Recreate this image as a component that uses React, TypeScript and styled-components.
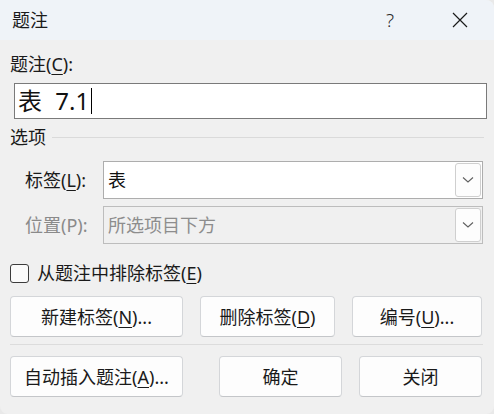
import styled, { createGlobalStyle } from 'styled-components';

const GlobalStyle = createGlobalStyle`
  html, body {
    margin: 0;
    padding: 0;
    background: #e9e9e9;
  }
  body {
    font-family: "Noto Sans", "Noto Sans CJK SC", sans-serif;
    color: #1a1a1a;
  }
`;

const Chevron = () => (
  <svg width="12" height="8" viewBox="0 0 12 8">
    <path d="M1 1.5 L6 6 L11 1.5" fill="none" stroke="#606060" strokeWidth="1.1" />
  </svg>
);

const CloseIcon = () => (
  <svg width="16" height="16" viewBox="0 0 16 16">
    <path d="M1 1 L15 15 M15 1 L1 15" stroke="#1a1a1a" strokeWidth="1.2" />
  </svg>
);

const Combo = ({ value, disabled }: { value: string; disabled?: boolean }) => (
  <ComboBox $disabled={disabled}>
    <ComboText $disabled={disabled}>{value}</ComboText>
    <DropButton>
      <Chevron />
    </DropButton>
  </ComboBox>
);

const App = () => {
  return (
    <>
      <GlobalStyle />
      <Window>
        <TitleBar>
          <Title>题注</Title>
          <TitleButtons>
            <TitleButton $width={70}>?</TitleButton>
            <TitleButton $width={69}>
              <CloseIcon />
            </TitleButton>
          </TitleButtons>
        </TitleBar>

        <Body>
          <FieldLabel>
            题注(<u>C</u>):
          </FieldLabel>
          <CaptionInput>
            <span>表 7.1</span>
            <Caret />
          </CaptionInput>

          <GroupHeader>
            <span>选项</span>
            <GroupLine />
          </GroupHeader>

          <OptionsGrid>
            <OptionLabel>
              标签(<u>L</u>):
            </OptionLabel>
            <Combo value="表" />
            <OptionLabel $disabled>位置(P):</OptionLabel>
            <Combo value="所选项目下方" disabled />
          </OptionsGrid>

          <CheckRow>
            <CheckBox />
            <span>
              从题注中排除标签(<u>E</u>)
            </span>
          </CheckRow>

          <ButtonRow>
            <Button $width={173}>
              新建标签(<u>N</u>)...
            </Button>
            <Button $width={135}>
              删除标签(<u>D</u>)
            </Button>
            <Button $width={130}>
              编号(<u>U</u>)...
            </Button>
          </ButtonRow>

          <Separator />

          <ButtonRow>
            <Button $width={173}>
              自动插入题注(<u>A</u>)...
            </Button>
            <ButtonGroup>
              <Button $width={123}>确定</Button>
              <Button $width={123}>关闭</Button>
            </ButtonGroup>
          </ButtonRow>
        </Body>
      </Window>
    </>
  );
};

export default App;

const Window = styled.div`
  width: 494px;
  height: 414px;
  background: #f0f0f0;
  border-radius: 0 8px 8px 8px;
  overflow: hidden;
  font-size: 18px;
  line-height: 24px;

  u {
    text-decoration-thickness: 1px;
    text-underline-offset: 3px;
  }
`;

const TitleBar = styled.div`
  height: 40px;
  display: flex;
  align-items: center;
  justify-content: space-between;
  background: #eff3f8;
`;

const Title = styled.div`
  padding-left: 12px;
  font-size: 18px;
  color: #1a1a1a;
`;

const TitleButtons = styled.div`
  display: flex;
  height: 100%;
`;

const TitleButton = styled.div<{ $width: number }>`
  width: ${(p) => p.$width}px;
  display: flex;
  align-items: center;
  justify-content: center;
  font-size: 19px;
  font-weight: 300;
  color: #2a2a2a;
`;

const Body = styled.div`
  display: flex;
  flex-direction: column;
  padding: 0 10px;
`;

const FieldLabel = styled.div`
  margin-top: 12px;
  height: 24px;
`;

const CaptionInput = styled.div`
  margin: 7px 0 0 4px;
  height: 34px;
  width: 468px;
  border: 1px solid #7a7a7a;
  background: #fff;
  display: flex;
  align-items: center;
  padding-left: 3px;
  font-size: 24px;
  line-height: 30px;
  white-space: pre;
  word-spacing: 7px;
  color: #111;
`;

const Caret = styled.span`
  display: inline-block;
  width: 1px;
  height: 26px;
  margin-left: 2px;
  background: #000;
`;

const GroupHeader = styled.div`
  margin-top: 6px;
  display: flex;
  align-items: center;
  height: 24px;
`;

const GroupLine = styled.div`
  flex: 1;
  height: 1px;
  margin-left: 6px;
  background: #dadada;
`;

const OptionsGrid = styled.div`
  margin-top: 12px;
  padding-left: 15px;
  display: grid;
  grid-template-columns: 78px 380px;
  row-gap: 7px;
  align-items: center;
`;

const OptionLabel = styled.div<{ $disabled?: boolean }>`
  color: ${(p) => (p.$disabled ? '#8a8a8a' : '#1a1a1a')};
`;

const ComboBox = styled.div<{ $disabled?: boolean }>`
  height: 36px;
  display: flex;
  align-items: center;
  justify-content: space-between;
  border: 1px solid ${(p) => (p.$disabled ? '#bdbdbd' : '#adadad')};
  background: ${(p) => (p.$disabled ? '#f0f0f0' : '#ffffff')};
  padding: 0 1px 0 4px;
`;

const ComboText = styled.span<{ $disabled?: boolean }>`
  color: ${(p) => (p.$disabled ? '#8d8d8d' : '#111')};
`;

const DropButton = styled.div`
  width: 24px;
  height: 32px;
  display: flex;
  align-items: center;
  justify-content: center;
  background: #fdfdfd;
  border: 1px solid #cfcfcf;
  border-radius: 3px;
`;

const CheckRow = styled.div`
  margin-top: 17px;
  display: flex;
  align-items: center;
  gap: 8px;
  height: 24px;
`;

const CheckBox = styled.div`
  width: 17px;
  height: 17px;
  border: 1px solid #3c3c3c;
  border-radius: 3px;
  background: #fbfbfb;
`;

const ButtonRow = styled.div`
  margin-top: 11px;
  width: 472px;
  display: flex;
  justify-content: space-between;

  & + & {
    margin-top: 15px;
  }
`;

const ButtonGroup = styled.div`
  display: flex;
  gap: 17px;
`;

const Button = styled.div<{ $width: number }>`
  width: ${(p) => p.$width}px;
  height: 41px;
  box-sizing: border-box;
  flex-shrink: 0;
  display: flex;
  align-items: center;
  justify-content: center;
  background: #fdfdfd;
  border: 1px solid #d4d6d9;
  border-bottom-color: #c4c6c9;
  border-radius: 4px;
  color: #1a1a1a;
`;

const Separator = styled.div`
  margin-top: 7px;
  height: 1px;
  background: #dcdcdc;
  width: 473px;
`;
